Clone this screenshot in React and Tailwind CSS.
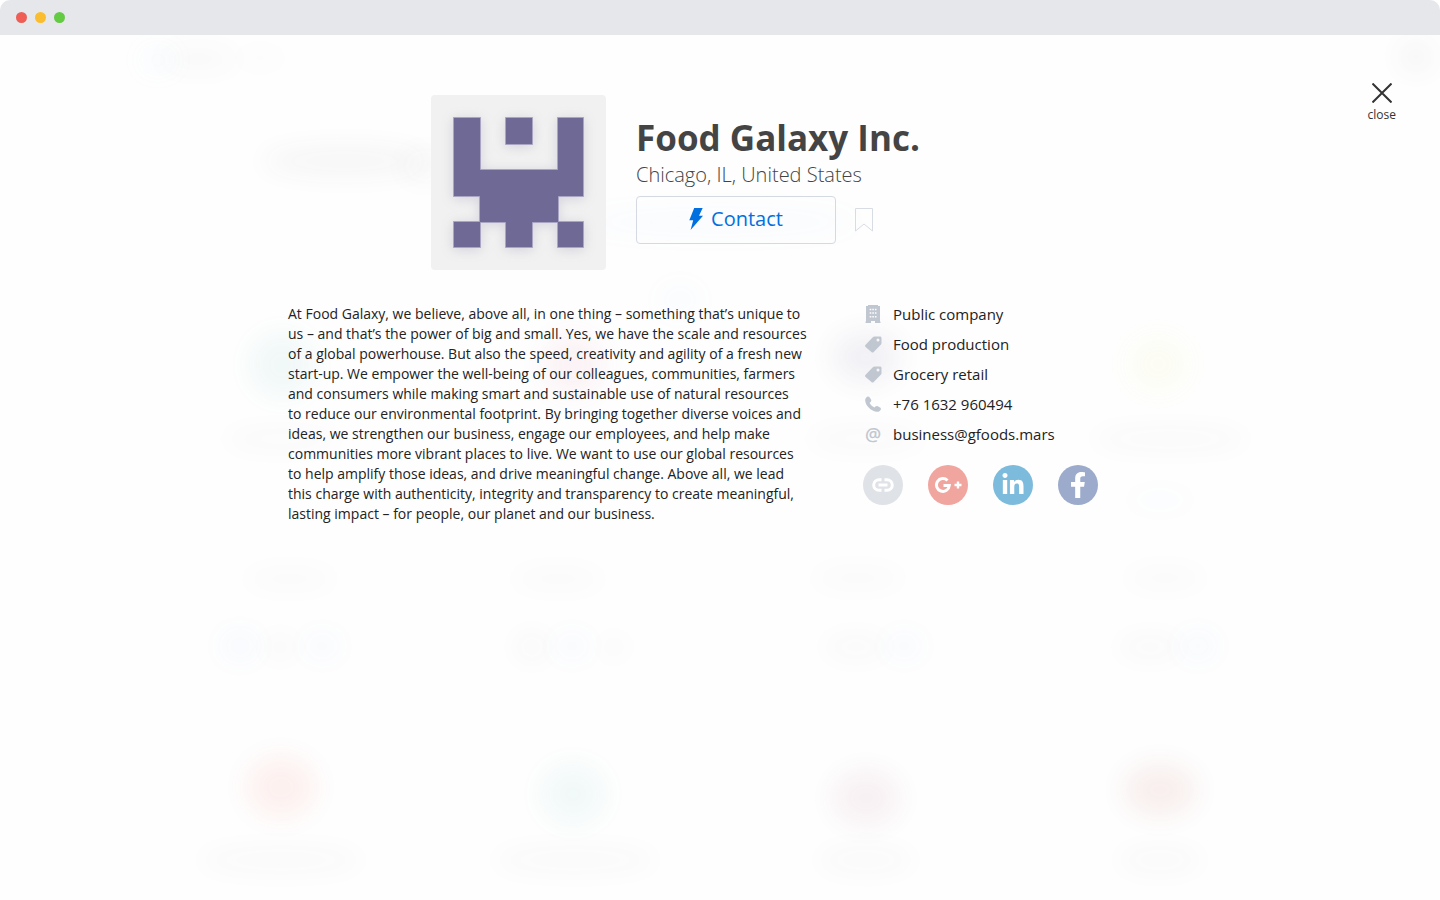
import React from "react";
import { FaLinkedinIn, FaFacebookF } from "react-icons/fa";

// Soft shapes of the company list behind the dialog: [cx, cy, rx, ry, colour, opacity]
const shapes = [
  [158, 60, 18, 12, "#a8d0ff", 0.06],
  [198, 59, 40, 10, "#555555", 0.035],
  [260, 58, 28, 10, "#555555", 0.01],
  [1416, 57, 16, 14, "#555555", 0.06],
  [345, 161, 84, 16, "#444444", 0.04],
  [425, 166, 26, 18, "#444444", 0.025],
  [680, 300, 22, 16, "#7aa8e8", 0.03],
  [720, 222, 140, 14, "#7aa8e8", 0.03],
  [282, 365, 32, 32, "#3fa9a0", 0.065],
  [573, 365, 32, 32, "#d04868", 0.06],
  [866, 357, 34, 26, "#55508a", 0.07],
  [1158, 364, 30, 28, "#dce050", 0.055],
  [282, 439, 60, 12, "#444444", 0.02],
  [866, 439, 60, 12, "#444444", 0.02],
  [1170, 439, 80, 12, "#444444", 0.025],
  [1160, 500, 36, 12, "#5a8ff0", 0.01],
  [290, 579, 48, 12, "#444444", 0.014],
  [558, 579, 48, 12, "#444444", 0.014],
  [858, 578, 48, 12, "#444444", 0.014],
  [1165, 578, 42, 12, "#444444", 0.014],
  [240, 646, 20, 16, "#5a8ff0", 0.04],
  [280, 647, 18, 14, "#444444", 0.02],
  [322, 646, 20, 14, "#5a8ff0", 0.03],
  [532, 647, 18, 15, "#444444", 0.026],
  [572, 646, 20, 14, "#5a8ff0", 0.03],
  [614, 647, 14, 12, "#444444", 0.018],
  [856, 647, 34, 14, "#444444", 0.018],
  [904, 646, 20, 14, "#5a8ff0", 0.03],
  [1150, 647, 34, 14, "#444444", 0.018],
  [1198, 646, 20, 15, "#5a8ff0", 0.035],
  [281, 787, 35, 31, "#ee5a45", 0.08],
  [573, 794, 32, 30, "#3aa5a5", 0.06],
  [866, 798, 34, 28, "#a04060", 0.065],
  [1160, 790, 37, 27, "#b04030", 0.075],
  [281, 860, 84, 15, "#444444", 0.018],
  [575, 860, 84, 15, "#444444", 0.018],
  [866, 860, 50, 15, "#444444", 0.018],
  [1160, 860, 44, 15, "#444444", 0.018],
];

function Backdrop() {
  return (
    <svg
      aria-hidden="true"
      viewBox="0 35 1440 865"
      preserveAspectRatio="xMidYMin slice"
      className="pointer-events-none absolute inset-0 h-full w-full"
    >
      <defs>
        <filter id="soft" x="-100%" y="-300%" width="300%" height="700%" colorInterpolationFilters="sRGB">
          <feGaussianBlur stdDeviation="13" />
        </filter>
      </defs>
      {shapes.map(([cx, cy, rx, ry, fill, opacity], i) => (
        <ellipse key={i} cx={cx} cy={cy} rx={rx} ry={ry} fill={fill} opacity={opacity} filter="url(#soft)" />
      ))}
    </svg>
  );
}

function CompanyLogo() {
  return (
    <svg
      role="img"
      aria-label="Food Galaxy Inc. logo"
      viewBox="0 0 175 175"
      className="h-[175px] w-[175px] shrink-0 rounded bg-[#f1f1f1]"
    >
      <defs>
        <filter id="logoShadow" x="-20%" y="-20%" width="140%" height="140%" colorInterpolationFilters="sRGB">
          <feDropShadow dx="0" dy="2" stdDeviation="6" floodColor="#6f6996" floodOpacity="0.22" />
        </filter>
      </defs>
      <g fill="#6f6996" stroke="#a9a5c2" strokeWidth="1" filter="url(#logoShadow)">
        <path d="M22.5 22.5H49.5V74.5H126.5V22.5H152.5V101.5H127.5V126.5H152.5V152.5H126.5V127.5H101.5V152.5H74.5V127.5H49.5V152.5H22.5V126.5H48.5V101.5H22.5z" />
        <path d="M74.5 22.5h27v27h-27z" />
      </g>
    </svg>
  );
}

function BuildingIcon() {
  return (
    <svg viewBox="0 0 16 18" className="h-[18px] w-4" fill="currentColor">
      <path
        fillRule="evenodd"
        d="M3 0h10v1h2v15.500h.5V18H10v-2H6v2H.5v-1.500H1V1h2zM4.700 3.700v1.600h1.600V3.700zm2.600 0v1.600h1.600V3.700zm2.600 0v1.600h1.600V3.700zM4.700 7.200v1.600h1.600V7.200zm2.600 0v1.600h1.600V7.200zm2.600 0v1.600h1.600V7.200zM4.700 11v1.600h1.600V11zm2.600 0v1.600h1.600V11zm2.600 0v1.600h1.600V11z"
      />
    </svg>
  );
}

function TagIcon() {
  return (
    <svg viewBox="0 0 17 17" className="size-[17px]" fill="currentColor">
      <path
        fillRule="evenodd"
        d="M9.600.4h5.400c.9 0 1.500.6 1.500 1.500v5.200c0 .7-.2 1.200-.7 1.700L8.700 16c-.7.700-1.600.7-2.300 0L.6 11c-.7-.7-.7-1.500 0-2.200L7.800 1.200C8.300.7 8.900.4 9.600.4zM13 2.400a1.500 1.500 0 1 0 0 3 1.500 1.500 0 0 0 0-3z"
      />
    </svg>
  );
}

function PhoneIcon() {
  return (
    <svg viewBox="0 0 16 16" className="size-4" fill="currentColor">
      <path d="M2.200.8C3 .2 4 .5 4.600 1.300L6 3.600c.5.9.3 1.700-.4 2.300l-1 .9c.9 2 2.600 3.700 4.800 4.800l1-1.100c.6-.6 1.500-.8 2.300-.3l2.400 1.400c.9.6 1 1.500.5 2.300-1 1.500-2.500 2.200-4.300 1.900C5.700 14.700 1 10 .2 5 0 3.200.7 1.800 2.200.8z" />
    </svg>
  );
}

function LinkIcon() {
  return (
    <svg viewBox="0 0 22 14" className="h-[14px] w-[22px]" fill="none" stroke="currentColor" strokeWidth="3">
      <path d="M9.500 1.700H7a5.300 5.300 0 0 0 0 10.600h2.500M12.500 1.700H15a5.300 5.300 0 0 1 0 10.600h-2.500" />
      <path d="M6.500 7h9" />
    </svg>
  );
}

function GooglePlusIcon() {
  return (
    <svg viewBox="0 0 27 16" className="h-4 w-[27px]" fill="none" stroke="currentColor" strokeWidth="3">
      <path d="M12.500 3.500A6.400 6.400 0 1 0 14.300 8.500H8.500" />
      <path d="M19.500 8h7M23 4.500v7" strokeWidth="2.400" />
    </svg>
  );
}

const facts = [
  { icon: <BuildingIcon />, text: "Public company" },
  { icon: <TagIcon />, text: "Food production" },
  { icon: <TagIcon />, text: "Grocery retail" },
  { icon: <PhoneIcon />, text: "+76 1632 960494", href: "tel:+761632960494" },
  { icon: <span className="text-lg font-semibold">@</span>, text: "business@gfoods.mars", href: "mailto:business@gfoods.mars" },
];

const socials = [
  { label: "Website", color: "bg-[#dfe2e7]", icon: <LinkIcon /> },
  { label: "Google Plus", color: "bg-[#f0a59f]", icon: <GooglePlusIcon /> },
  { label: "LinkedIn", color: "bg-[#7cbbdb]", icon: <FaLinkedinIn size={24} /> },
  { label: "Facebook", color: "bg-[#9cabcc]", icon: <FaFacebookF size={26} /> },
];

const about = [
  "At Food Galaxy, we believe, above all, in one thing – something that’s unique to",
  "us – and that’s the power of big and small. Yes, we have the scale and resources",
  "of a global powerhouse. But also the speed, creativity and agility of a fresh new",
  "start-up. We empower the well-being of our colleagues, communities, farmers",
  "and consumers while making smart and sustainable use of natural resources",
  "to reduce our environmental footprint. By bringing together diverse voices and",
  "ideas, we strengthen our business, engage our employees, and help make",
  "communities more vibrant places to live. We want to use our global resources",
  "to help amplify those ideas, and drive meaningful change. Above all, we lead",
  "this charge with authenticity, integrity and transparency to create meaningful,",
  "lasting impact – for people, our planet and our business.",
];

export default function App() {
  return (
    <div className="flex min-h-screen flex-col bg-white font-['Open_Sans',sans-serif]">
      <div className="flex h-[35px] items-center gap-2 rounded-t-[10px] bg-[#e6e7eb] px-4">
        <span className="size-[11px] rounded-full bg-[#ef5d55]" />
        <span className="size-[11px] rounded-full bg-[#fabd2f]" />
        <span className="size-[11px] rounded-full bg-[#62cb41]" />
      </div>

      <div className="relative flex-1 overflow-hidden bg-[#fefefe]">
        <Backdrop />
        <div className="relative grid grid-cols-[1fr_minmax(0,864px)_1fr]">
          <main className="col-start-2 pt-[60px]">
            <header className="mx-auto flex max-w-[578px] gap-[30px]">
              <CompanyLogo />
              <div className="pt-[18px]">
                <h1 className="text-[35px] leading-[50px] font-bold whitespace-nowrap text-[#444]">Food Galaxy Inc.</h1>
                <p className="text-xl leading-6 font-light text-[#444]">Chicago, IL, United States</p>
                <div className="mt-[9px] flex items-center gap-[18px]">
                  <button
                    type="button"
                    className="flex h-12 w-[200px] items-center justify-center gap-2 rounded border border-[#d5d9e2] pb-0.5 text-xl text-[#0070e0]"
                  >
                    <svg viewBox="0 0 14 22" className="h-[22px] w-[14px]" fill="currentColor" aria-hidden="true">
                      <path d="M5.200 0h8.500L10 7.800h4L1.600 22l2.600-9.800H.3z" />
                    </svg>
                    Contact
                  </button>
                  <button type="button" aria-label="Save company" className="text-[#d8dce4]">
                    <svg viewBox="0 0 20 24" className="h-6 w-5" fill="none" stroke="currentColor">
                      <path d="M1.500.5h17v22.500L10 16 1.500 23z" />
                    </svg>
                  </button>
                </div>
              </div>
            </header>

            <div className="mt-[34px] flex gap-[43px] text-[#222]">
              <p className="w-[532px] text-sm leading-5">
                {about.map((line) => (
                  <React.Fragment key={line}>
                    {line}
                    <br />
                  </React.Fragment>
                ))}
              </p>
              <aside className="text-[15px] leading-5">
                <ul className="flex flex-col gap-[10px]">
                  {facts.map(({ icon, text, href }) => (
                    <li key={text} className="flex items-center gap-[10px]">
                      <span aria-hidden="true" className="flex h-5 w-5 items-center justify-center text-[#c1c7d0]">
                        {icon}
                      </span>
                      {href ? <a href={href}>{text}</a> : text}
                    </li>
                  ))}
                </ul>
                <div className="mt-[21px] flex gap-[25px]">
                  {socials.map(({ label, color, icon }) => (
                    <a
                      key={label}
                      href="#"
                      aria-label={label}
                      className={`flex size-10 items-center justify-center rounded-full text-white ${color}`}
                    >
                      {icon}
                    </a>
                  ))}
                </div>
              </aside>
            </div>
          </main>

          <button
            type="button"
            className="flex flex-col items-center gap-1 self-start justify-self-end pt-12 pr-11 text-xs leading-4 text-[#333]"
          >
            <svg viewBox="0 0 20 20" className="size-5" fill="none" stroke="currentColor" strokeWidth="2" aria-hidden="true">
              <path d="M.5.5l19 19M19.5.5l-19 19" />
            </svg>
            close
          </button>
        </div>
      </div>
    </div>
  );
}
